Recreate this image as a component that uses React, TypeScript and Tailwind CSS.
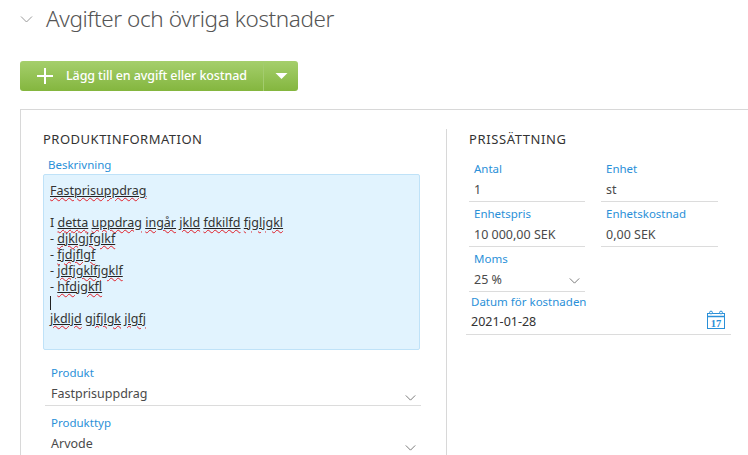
const font = { fontFamily: '"Noto Sans", sans-serif' };

function Chevron({ className }: { className: string }) {
  return (
    <svg viewBox="0 0 12 7" className={className} fill="none" stroke="currentColor" strokeWidth="1">
      <path d="M0.5 0.5 L6 6 L11.5 0.5" />
    </svg>
  );
}

function Sp({ children }: { children: string }) {
  return (
    <span className="underline decoration-[#222] underline-offset-[1px]">
      <span className="underline decoration-wavy decoration-[#e0202a] decoration-1 underline-offset-[2px]">{children}</span>
    </span>
  );
}

function Field({
  label,
  value,
  chevron,
  labelClass = "pl-[5px]",
  className = "",
}: {
  label: string;
  value: string;
  chevron?: string;
  labelClass?: string;
  className?: string;
}) {
  return (
    <div className={`h-[45px] border-b border-[#dcdcdc] ${labelClass} ${className}`}>
      <div className="flex h-[21px] items-center pt-[3px] text-[11.5px] text-[#2a90d8]">{label}</div>
      <div className="flex h-[23px] items-center justify-between pt-[2px] pr-[5px] text-[12.5px] text-[#4a4a4a]">
        <span>{value}</span>
        {chevron && <Chevron className={`h-[6px] w-[11px] text-[#666] ${chevron}`} />}
      </div>
    </div>
  );
}

function CalendarIcon() {
  return (
    <svg viewBox="0 0 20 20" className="-mt-[5px] h-[20px] w-[20px] text-[#2a90d8]" fill="none" stroke="currentColor">
      <rect x="1.5" y="3.5" width="17" height="15" strokeWidth="1" />
      <path d="M1.5 6.5 H18.5" strokeWidth="1.5" />
      <path d="M5 3.5 H15" strokeWidth="1" />
      <circle cx="5" cy="2.5" r="1.4" fill="#fff" strokeWidth="1" />
      <circle cx="15" cy="2.5" r="1.4" fill="#fff" strokeWidth="1" />
      <text x="10" y="16.5" textAnchor="middle" fontSize="10.5" fontWeight="700" fontFamily="Liberation Serif, serif" fill="currentColor" stroke="none">
        17
      </text>
    </svg>
  );
}

export default function App() {
  return (
    <div className="h-[455px] w-[748px] overflow-hidden bg-white pl-[20px]" style={font}>
      <div className="flex h-[37px] items-center">
        <Chevron className="mt-[1px] h-[7px] w-[13px] text-[#999]" />
        <h2 className="ml-[13px] text-[22.5px] leading-[30px] font-light tracking-[-0.4px] text-[#555]">Avgifter och övriga kostnader</h2>
      </div>

      <div className="mt-[24px] flex h-[30px] w-[278px] items-center rounded-[3px] bg-gradient-to-b from-[#a5cf6b] to-[#84b63e] text-white">
        <svg viewBox="0 0 16 16" className="ml-[17px] h-[16px] w-[16px]" stroke="currentColor" strokeWidth="2">
          <path d="M8 0 V16 M0 8 H16" />
        </svg>
        <span className="ml-[13px] w-[198px] border-r border-[#a3cc6e] text-[12.5px] leading-[30px] font-medium tracking-[-0.1px]">
          Lägg till en avgift eller kostnad
        </span>
        <svg viewBox="0 0 12 6" className="ml-[11px] h-[6px] w-[13px]" fill="currentColor">
          <path d="M0 0 H12 L6 6 Z" />
        </svg>
      </div>

      <div className="mt-[18px] flex h-[400px] border-t border-l border-[#d8d8d8] pt-[19px] pl-[22px]">
        <div className="w-[378px]">
          <h3 className="text-[13px] leading-[20px] tracking-[0.5px] text-[#333]">PRODUKTINFORMATION</h3>
          <div className="mt-[9px] pl-[5px] text-[11.5px] leading-[14px] text-[#2a90d8]">Beskrivning</div>
          <div className="mt-[2px] h-[176px] w-[377px] rounded-[2px] border border-[#bfe2f8] bg-[#e1f3fe] px-[6px] pt-[8px] text-[12.5px] leading-[16px] text-[#333]">
            <div><Sp>Fastprisuppdrag</Sp></div>
            <div className="h-[16px]" />
            <div>I <Sp>detta</Sp> <Sp>uppdrag</Sp> <Sp>ingår</Sp> <Sp>jkld</Sp> <Sp>fdkilfd</Sp> <Sp>fjgljgkl</Sp></div>
            <div>- <Sp>djklgjfglkf</Sp></div>
            <div>- <Sp>fjdjflgf</Sp></div>
            <div>- <Sp>jdfjgklfjgklf</Sp></div>
            <div>- <Sp>hfdjgkfl</Sp></div>
            <div className="flex h-[16px] items-center"><div className="h-[14px] w-px bg-[#222]" /></div>
            <div><Sp>jkdljd</Sp> <Sp>gjfjlgk</Sp> <Sp>jlgfj</Sp></div>
          </div>
          <Field label="Produkt" value="Fastprisuppdrag" chevron="mt-[6px]" labelClass="pl-[6px]" className="mt-[11px] ml-[2px] w-[376px]" />
          <Field label="Produkttyp" value="Arvode" chevron="mt-[6px]" labelClass="pl-[6px]" className="mt-[5px] ml-[2px] w-[376px]" />
        </div>

        <div className="ml-[25px] border-l border-[#d8d8d8] pl-[22px]">
          <h3 className="text-[13px] leading-[20px] tracking-[0.6px] text-[#333]">PRISSÄTTNING</h3>
          <div className="mt-[8px] grid w-[249px] grid-cols-[116px_117px] gap-x-[16px]">
            <Field label="Antal" value="1" />
            <Field label="Enhet" value="st" />
            <Field label="Enhetspris" value="10 000,00 SEK" />
            <Field label="Enhetskostnad" value="0,00 SEK" />
            <Field label="Moms" value="25 %" chevron="mt-[1px]" />
          </div>
          <div className="-ml-[3px] h-[43px] w-[265px] border-b border-[#dcdcdc] pl-[5px]">
            <div className="text-[11.5px] leading-[20px] text-[#2a90d8]">Datum för kostnaden</div>
            <div className="flex h-[21px] items-center justify-between pr-[5px] text-[12.5px] text-[#333]">
              <span>2021-01-28</span>
              <CalendarIcon />
            </div>
          </div>
        </div>
      </div>
    </div>
  );
}
